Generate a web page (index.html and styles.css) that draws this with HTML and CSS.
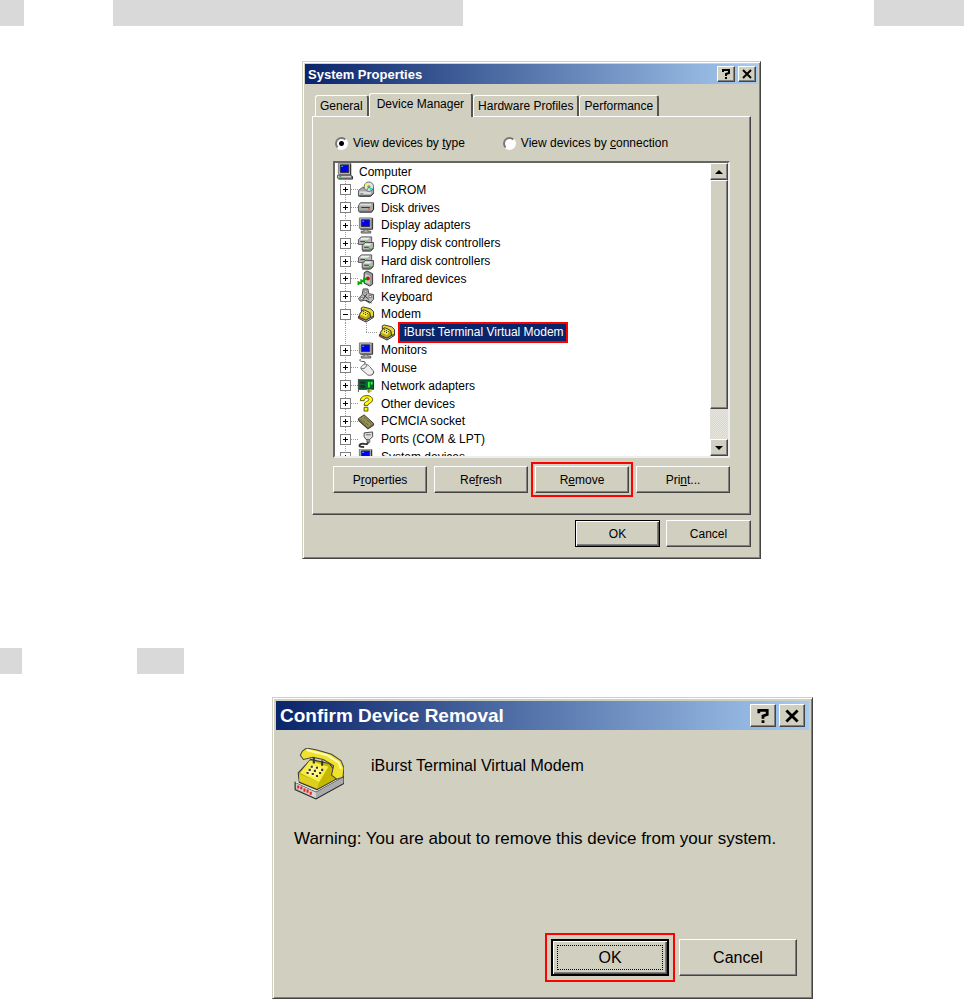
FILE: index.html
```
<!DOCTYPE html>
<html lang="en">
  <head>
    <meta charset="UTF-8" />
    <title>Removing the modem</title>
    <link rel="stylesheet" href="styles.css">
  </head>

  <body>
    <!-- Icons -->
    <svg class="defs" aria-hidden="true">
      <symbol id="computer" viewBox="0 0 18 18">
        <path d="M2 0h13v12H2z" fill="#c0c0c0" stroke="#777" />
        <path d="M15 1v12H3" fill="none" stroke="#222" />
        <path d="M4 2h9v8H4z" fill="#00e" stroke="#333" />
        <path d="M5 3h2v1H5z" fill="#3cf" />
        <path d="M1 13h15v3H1z" fill="#ccc" stroke="#555" />
        <path d="M2 17h15V14" fill="none" stroke="#222" />
        <path d="M3 14h2v1H3z" fill="#0a0" />
      </symbol>
      <symbol id="monitor" viewBox="0 0 18 18">
        <path d="M2 1h13v11H2z" fill="#c0c0c0" stroke="#777" />
        <path d="M16 1v12H3" fill="none" stroke="#222" />
        <path d="M4 3h9v7H4z" fill="#00e" stroke="#333" />
        <path d="M5 4h2v1H5z" fill="#3cf" />
        <path d="M7 13h4v2h3v2H4v-2h3z" fill="#aaa" stroke="#555" />
      </symbol>
      <symbol id="cdrom" viewBox="0 0 18 18">
        <path d="M1 10l4-3h12v6l-3 3H1z" fill="#aaa" stroke="#555" />
        <path d="M2 11h12v3H2z" fill="#ddd" />
        <path d="M2 16h12l3-3" fill="none" stroke="#222" />
        <circle cx="12" cy="6" r="5" fill="#e4e4e4" stroke="#666" />
        <path d="M12 6L8 3l3-1z" fill="#ff0" />
        <path d="M12 6l4 2-2 2z" fill="#0dd" />
        <path d="M12 6l-1 4-2-1z" fill="#3c3" />
        <circle cx="12" cy="6" r="1" fill="#fff" stroke="#555" />
        <path d="M3 13h3v1H3z" fill="#0b0" />
      </symbol>
      <symbol id="disk" viewBox="0 0 18 18">
        <path d="M1 7l2-3h14v7l-2 2H1z" fill="#aaa" stroke="#555" />
        <path d="M3 5h12l-1 2H2z" fill="#ddd" />
        <path d="M4 9h9" stroke="#333" />
        <path d="M2 14h13l2-3V5" fill="none" stroke="#222" />
        <path d="M11 10h2v1h-2z" fill="#d33" />
      </symbol>
      <symbol id="drives" viewBox="0 0 18 18">
        <path d="M1 5l3-3h11v5l-3 3H1z" fill="#b5b5b5" stroke="#555" />
        <path d="M4 3h9l-2 2H3z" fill="#eee" />
        <path d="M5 11l3-3h9v5l-3 3H5z" fill="#b5b5b5" stroke="#444" />
        <path d="M8 9h7l-2 2H7z" fill="#eee" />
        <path d="M3 7h5M7 13h5" stroke="#333" />
        <path d="M9 7h2v1H9zM12 14h2v1h-2z" fill="#0c0" />
        <path d="M5 17h9l3-3" fill="none" stroke="#222" />
      </symbol>
      <symbol id="infrared" viewBox="0 0 18 18">
        <path d="M7 3l3-2 6 3v11l-3 2-6-3z" fill="#999" stroke="#333" />
        <path d="M8 4l5 2v9l-5-2z" fill="#ccc" />
        <circle cx="11" cy="9" r="2" fill="#e00" />
        <path d="M1 16v-3l3 1v-3l3 1v-3l3 1" fill="none" stroke="#0a0" stroke-width="2" />
      </symbol>
      <symbol id="keyboard" viewBox="0 0 18 18">
        <path d="M6 1h5l1 5 5 1v5l-4 4-5-3-5 1-2-3 4-4z" fill="#bbb" stroke="#444" />
        <path d="M7 3h3v2H7zM3 10h3v2H3zM12 8h3v2h-3z" fill="#fff" stroke="#777" />
        <path d="M6 7l6 5M10 6l-4 6M9 13l6 3" stroke="#333" />
      </symbol>
      <symbol id="phone" viewBox="0 0 50 50">
        <path d="M3 33l20 9 27-15v7L23 49 3 40z" fill="#aaa" stroke="#222" stroke-width="1" />
        <path d="M4 34l19 9v5L4 39z" fill="#d5d5d5" />
        <path d="M3 33l9-5 30-4 7 4-26 14z" fill="#e4e4e4" />
        <path d="M6 36v3m3-2v3m3-1v3m3-2v3m3-1v3" stroke="#e22" stroke-width="2" />
        <path d="M6 24l12-13 18 4 10 13-22 12-17-7z" fill="#c6b800" stroke="#333" stroke-width="1" />
        <path d="M8 24l9-12 18 6-9 15z" fill="#f5ec45" />
        <path d="M7 25l19 8-2 6-17-7z" fill="#ddd020" />
        <path d="M18 16l12 4-6 9-11-4z" fill="#fff68a" />
        <path d="M18 18h2m3 1h2m3 2h2m-14 0h2m3 1h2m3 2h2m-14 0h2m3 1h2m2 2h2" stroke="#333" stroke-width="2" />
        <path d="M10 3l4-3 10 2 14 4 9 6 3 7-1 9-6 2-5-4 2-9-10-6-10-2-9 2-3-4z" fill="#eee22c" stroke="#444" stroke-width="1" />
        <path d="M14 2l20 5 11 7 2 6" fill="none" stroke="#fffcae" stroke-width="2" />
        <path d="M21 9v6m8-3v5" stroke="#333" stroke-width="2" />
      </symbol>
      <symbol id="modem" viewBox="0 0 18 18">
        <path d="M1 13l8 4 8-5v-2l-8 5-8-4z" fill="#ccc" stroke="#222" />
        <path d="M2 13l4 2" stroke="#d22" stroke-width="1" />
        <path d="M2 9l4-6 10 2 1 5-8 5-7-3z" fill="#b8aa10" stroke="#333" />
        <path d="M3 9l4-5 6 2-4 6z" fill="#f2e64a" />
        <path d="M6 6h1m1 1h1m1 1h1m-5 0h1m1 1h1" stroke="#222" />
        <path d="M4 2l2-1 8 2 3 3v5l-3 1-1-5-6-3-3 1z" fill="#e8dc30" stroke="#333" />
      </symbol>
      <symbol id="mouse" viewBox="0 0 18 18">
        <path d="M3 0c-3 5 9 0 4 6" fill="none" stroke="#444" />
        <path d="M5 7c3-3 6-1 8 1l4 5c1 3-3 5-6 4L4 11C3 9 4 8 5 7z" fill="#eee" stroke="#666" />
        <path d="M4 10c3 1 5-1 6-4M15 17c2-1 2-2 2-4" fill="none" stroke="#555" />
      </symbol>
      <symbol id="network" viewBox="0 0 18 18">
        <path d="M1 3h16v10H1z" fill="#063" stroke="#032" />
        <path d="M3 5h5v2H3zM3 9h5v2H3z" fill="#222" />
        <path d="M11 5h2v6h-2zM14 5h2v3h-2z" fill="#3f3" />
        <path d="M10 13h5v3h-5z" fill="#dc0" />
        <path d="M12 12v5M1 2v14" stroke="#555" />
      </symbol>
      <symbol id="question" viewBox="0 0 18 18">
        <path d="M3 6c0-7 13-7 13-1 0 4-5 3-5 6H7c0-5 5-4 5-6 0-3-5-2-5 1zM7 13h4v4H7z" fill="#ff0" stroke="#554f00" />
      </symbol>
      <symbol id="card" viewBox="0 0 18 18">
        <path d="M1 6l6-4 10 9v2l-6 4L1 8z" fill="#776f42" stroke="#333" />
        <path d="M2 6l5-3 9 8-5 4z" fill="#99915c" />
        <path d="M4 7l8 6M7 5l7 6M2 9l9 7" stroke="#443f22" stroke-dasharray="1 1" />
      </symbol>
      <symbol id="port" viewBox="0 0 18 18">
        <path d="M7 2l9-1v5l-3 3H9L7 6z" fill="#ddd" stroke="#444" />
        <path d="M9 4h5M10 9h3v3h-3z" fill="#999" stroke="#666" />
        <path d="M11 12c0 4-5 0-8 2-3 3 2 3 4 3" fill="none" stroke="#333" stroke-width="2" />
      </symbol>
      <symbol id="help" viewBox="0 0 10 10">
        <path d="M2 3V1h6v3L5 5v2M4 9h2" fill="none" stroke="#000" stroke-width="2" />
      </symbol>
      <symbol id="close" viewBox="0 0 10 10">
        <path d="M1 1l8 8M9 1L1 9" stroke="#000" stroke-width="2" />
      </symbol>
    </svg>

    <div class="line">
      <span class="mark step"></span>
      <span class="mark text"></span>
      <span class="mark end"></span>
    </div>

    <!-- System Properties -->
    <div class="figure">
      <section class="window properties">
        <header class="titlebar">
          <h2>System Properties</h2>
          <button aria-label="Help"><svg><use href="#help" /></svg></button>
          <button aria-label="Close"><svg><use href="#close" /></svg></button>
        </header>

        <div class="tabs">
          <button>General</button>
          <button class="active">Device Manager</button>
          <button>Hardware Profiles</button>
          <button>Performance</button>
        </div>

        <div class="panel">
          <div class="views">
            <label><input type="radio" name="view" checked />View devices by <u>t</u>ype</label>
            <label><input type="radio" name="view" />View devices by <u>c</u>onnection</label>
          </div>

          <div class="listbox">
            <ul class="tree">
              <li class="root"><svg><use href="#computer" /></svg>Computer</li>
              <li><button class="toggle plus" aria-label="Expand"></button><svg><use href="#cdrom" /></svg>CDROM</li>
              <li><button class="toggle plus" aria-label="Expand"></button><svg><use href="#disk" /></svg>Disk drives</li>
              <li><button class="toggle plus" aria-label="Expand"></button><svg><use href="#monitor" /></svg>Display adapters</li>
              <li><button class="toggle plus" aria-label="Expand"></button><svg><use href="#drives" /></svg>Floppy disk controllers</li>
              <li><button class="toggle plus" aria-label="Expand"></button><svg><use href="#drives" /></svg>Hard disk controllers</li>
              <li><button class="toggle plus" aria-label="Expand"></button><svg><use href="#infrared" /></svg>Infrared devices</li>
              <li><button class="toggle plus" aria-label="Expand"></button><svg><use href="#keyboard" /></svg>Keyboard</li>
              <li><button class="toggle" aria-label="Collapse"></button><svg><use href="#modem" /></svg>Modem</li>
              <li class="child"><svg><use href="#modem" /></svg><span class="selected">iBurst Terminal Virtual Modem</span></li>
              <li><button class="toggle plus" aria-label="Expand"></button><svg><use href="#monitor" /></svg>Monitors</li>
              <li><button class="toggle plus" aria-label="Expand"></button><svg><use href="#mouse" /></svg>Mouse</li>
              <li><button class="toggle plus" aria-label="Expand"></button><svg><use href="#network" /></svg>Network adapters</li>
              <li><button class="toggle plus" aria-label="Expand"></button><svg><use href="#question" /></svg>Other devices</li>
              <li><button class="toggle plus" aria-label="Expand"></button><svg><use href="#card" /></svg>PCMCIA socket</li>
              <li><button class="toggle plus" aria-label="Expand"></button><svg><use href="#port" /></svg>Ports (COM &amp; LPT)</li>
              <li><button class="toggle plus" aria-label="Expand"></button><svg><use href="#computer" /></svg>System devices</li>
            </ul>
            <div class="scrollbar">
              <button class="up" aria-label="Scroll up"></button>
              <div class="thumb"></div>
              <button class="down" aria-label="Scroll down"></button>
            </div>
          </div>

          <div class="actions">
            <button class="push">P<u>r</u>operties</button>
            <button class="push">Re<u>f</u>resh</button>
            <button class="push outlined">R<u>e</u>move</button>
            <button class="push">Pri<u>n</u>t...</button>
          </div>
        </div>

        <footer>
          <button class="push default">OK</button>
          <button class="push">Cancel</button>
        </footer>
      </section>
    </div>

    <div class="line second">
      <span class="mark step"></span>
      <span class="mark word"></span>
    </div>

    <!-- Confirm Device Removal -->
    <div class="figure">
      <section class="window confirm">
        <header class="titlebar">
          <h2>Confirm Device Removal</h2>
          <button aria-label="Help"><svg><use href="#help" /></svg></button>
          <button aria-label="Close"><svg><use href="#close" /></svg></button>
        </header>

        <div class="message">
          <div class="device">
            <svg><use href="#phone" /></svg>
            <span>iBurst Terminal Virtual Modem</span>
          </div>
          <p>Warning: You are about to remove this device from your system.</p>
        </div>

        <footer>
          <button class="push default outlined">OK</button>
          <button class="push">Cancel</button>
        </footer>
      </section>
    </div>
  </body>
</html>
```

FILE: styles.css
```
* {
  box-sizing: border-box;
}

body {
  margin: 0;
  background-color: white;
  color: black;
  font-family: "Liberation Sans", Arial, sans-serif;
  font-size: 12px;
}

button {
  padding: 0;
  background-color: #d1cfc0;
  color: black;
  font: inherit;
}

.defs {
  display: none;
}

/* Grey marks in the text lines */
.line {
  display: flex;
  height: 26px;
}

.line.second {
  margin-top: 89px;
}

.mark {
  background-color: #d9d9d9;
}

.mark.step {
  width: 24px;
}

.mark.text {
  width: 350px;
  margin-left: 89px;
}

.mark.end {
  width: 90px;
  margin-left: auto;
}

.second .step {
  width: 22px;
}

.mark.word {
  width: 47px;
  margin-left: 115px;
}

/* Windows */
.figure {
  display: flex;
  justify-content: center;
  padding-left: 99px;
  margin-top: 35px;
}

.second + .figure {
  padding-left: 121px;
  margin-top: 23px;
}

.window {
  width: 100%;
  background-color: #d1cfc0;
  border: 1px solid;
  border-color: #d1cfc0 #444 #444 #d1cfc0;
  box-shadow: inset 1px 1px white, inset -1px -1px #808080;
  padding: 2px;
}

.properties {
  max-width: 459px;
}

.confirm {
  max-width: 541px;
  padding: 3px;
  font-size: 16px;
}

.titlebar {
  display: flex;
  align-items: center;
  height: 20px;
  padding: 0 2px 0 3px;
  background: linear-gradient(to right, #0a246a, #a6caf0);
}

.titlebar h2 {
  flex: 1;
  margin: 0;
  color: white;
  font-size: 13px;
}

.titlebar button {
  display: flex;
  align-items: center;
  justify-content: center;
  width: 18px;
  height: 16px;
  margin-left: 3px;
}

.titlebar svg {
  width: 10px;
  height: 10px;
}

.titlebar button,
.push,
.scrollbar button,
.thumb {
  border: 1px solid;
  border-color: white #444 #444 white;
  box-shadow: inset -1px -1px #808080;
}

.confirm .titlebar {
  height: 29px;
  padding: 0 4px;
}

.confirm .titlebar h2 {
  font-size: 19px;
}

.confirm .titlebar button {
  width: 26px;
  height: 23px;
}

.confirm .titlebar svg {
  width: 14px;
  height: 14px;
}

/* Tabs */
.tabs {
  display: flex;
  align-items: flex-end;
  padding: 9px 0 0 10px;
}

.tabs button {
  height: 21px;
  padding: 0 4px;
  border: 1px solid white;
  border-right: 2px solid #555;
  border-bottom: 0;
  border-radius: 3px 3px 0 0;
  white-space: nowrap;
}

.tabs .active {
  position: relative;
  height: 24px;
  padding: 0 7px 4px;
  margin-bottom: -1px;
}

.panel {
  margin: 0 7px;
  padding: 18px 20px 21px;
  border: 1px solid;
  border-color: white #444 #444 white;
  box-shadow: inset -1px -1px #808080;
}

.views {
  display: flex;
  gap: 36px;
}

.views label {
  display: flex;
  align-items: center;
  height: 16px;
  white-space: pre;
}

.views input {
  appearance: none;
  width: 13px;
  height: 13px;
  margin: 0 5px 0 2px;
  border: 2px solid;
  border-color: #777 white white #777;
  border-radius: 50%;
  background-color: white;
}

.views input:checked {
  background-image: radial-gradient(circle, black 2px, white 3px);
}

/* Device list */
.listbox {
  display: flex;
  height: 297px;
  margin-top: 10px;
  border: 2px solid;
  border-color: #666 #eee #eee #666;
  background-color: white;
  overflow: hidden;
}

.tree {
  flex: 1;
  display: grid;
  grid-auto-rows: 1fr;
  height: 303px;
  margin: 0;
  padding: 0;
  list-style: none;
}

.tree li {
  display: flex;
  align-items: center;
  padding-left: 5px;
  /* vertical branch, then the stub that leads to the icon */
  background:
    repeating-linear-gradient(#999 0 1px, white 1px 2px) 10px 0 / 1px 100% no-repeat,
    repeating-linear-gradient(to right, #999 0 1px, white 1px 2px) 10px 50% / 14px 1px no-repeat;
}

.tree svg {
  width: 18px;
  height: 17px;
  margin: 0 6px;
}

.tree .root {
  padding-left: 1px;
  background: none;
}

.tree .root svg {
  margin: 0 5px 0 0;
}

.tree .child {
  padding-left: 37px;
  background:
    repeating-linear-gradient(#999 0 1px, white 1px 2px) 10px 0 / 1px 100% no-repeat,
    repeating-linear-gradient(#999 0 1px, white 1px 2px) 31px 0 / 1px 50% no-repeat,
    repeating-linear-gradient(to right, #999 0 1px, white 1px 2px) 31px 50% / 12px 1px no-repeat;
}

.tree .child svg {
  margin-right: 4px;
}

.toggle {
  width: 11px;
  height: 11px;
  border: 1px solid #808080;
  background: linear-gradient(black, black) center / 5px 1px no-repeat white;
}

.toggle.plus {
  background:
    linear-gradient(black, black) center / 5px 1px no-repeat,
    linear-gradient(black, black) center / 1px 5px no-repeat,
    white;
}

.selected {
  position: relative;
  height: 17px;
  padding: 0 2px 0 4px;
  outline: 2px solid red;
  background-color: #0a246a;
  color: white;
  line-height: 17px;
}

.scrollbar {
  display: flex;
  flex-direction: column;
  width: 18px;
  background: repeating-conic-gradient(#e8e7e0 0 25%, #d8d6ca 0 50%) 0 0 / 2px 2px;
}

.scrollbar button {
  display: flex;
  align-items: center;
  justify-content: center;
  height: 17px;
}

.scrollbar button::before {
  content: "";
  border: 4px solid transparent;
}

.scrollbar .up::before {
  border-top: 0;
  border-bottom-color: black;
}

.scrollbar .down::before {
  border-bottom: 0;
  border-top-color: black;
}

.thumb {
  height: 78%;
  background-color: #d1cfc0;
}

.scrollbar .down {
  margin-top: auto;
}

/* Push buttons */
.push {
  height: 27px;
}

.push.default {
  border-color: black;
  box-shadow: inset 1px 1px white, inset -1px -1px #555, inset -2px -2px #808080;
}

.outlined {
  outline: 2px solid red;
  outline-offset: 2px;
}

.actions {
  display: grid;
  grid-template-columns: repeat(4, 1fr);
  gap: 7px;
  margin-top: 8px;
}

footer {
  display: flex;
  justify-content: flex-end;
  gap: 6px;
  padding: 5px 7px 9px;
}

footer .push {
  width: 85px;
}

.message {
  padding: 18px 18px 0 16px;
}

.device {
  display: flex;
  gap: 27px;
}

.device svg {
  width: 52px;
  height: 52px;
}

.device span {
  line-height: 36px;
}

.message p {
  margin: 27px 0 0 2px;
  font-size: 17px;
  line-height: 24px;
}

.confirm footer {
  gap: 10px;
  padding: 88px 12px 19px;
}

.confirm footer .push {
  width: 118px;
  height: 37px;
}

/* focus ring inside the chosen button */
.confirm .default::before {
  content: "";
  position: absolute;
  inset: 4px;
  border: 1px dotted black;
}

.confirm .default {
  position: relative;
  border-width: 2px;
  outline-offset: 4px;
}
```
